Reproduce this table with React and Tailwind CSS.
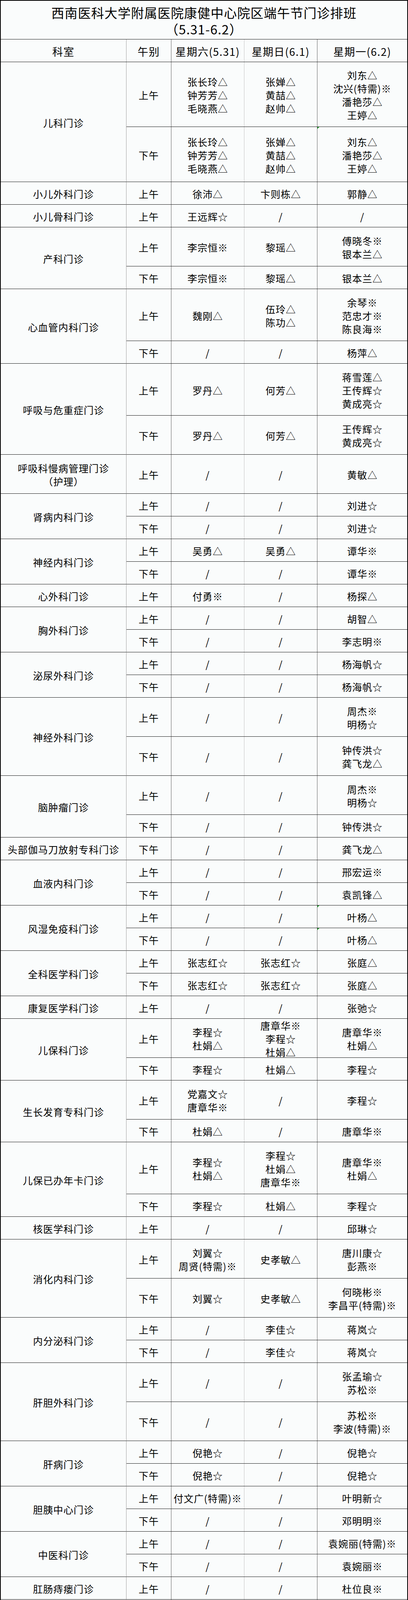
import React from 'react';

const H = {
  58: 'h-[58px]',
  91: 'h-[91px]',
  100: 'h-[100px]',
  133: 'h-[133px]',
  141: 'h-[141px]',
  166: 'h-[166px]',
};

const X = '/';
const r = (s, h, c, opt = {}) => ({ s, h, c, ...opt });

const depts = [
  { n: ['儿科门诊'], r: [
    r('上午', 166, [['张长玲△', '钟芳芳△', '毛晓燕△'], ['张婵△', '黄喆△', '赵帅△'], ['刘东△', '沈兴(特需)※', '潘艳莎△', '王婷△']]),
    r('下午', 141, [['张长玲△', '钟芳芳△', '毛晓燕△'], ['张婵△', '黄喆△', '赵帅△'], ['刘东△', '潘艳莎△', '王婷△']], { g: true }),
  ]},
  { n: ['小儿外科门诊'], r: [r('上午', 58, ['徐沛△', '卞则栋△', '郭静△'])] },
  { n: ['小儿骨科门诊'], r: [r('上午', 58, ['王远辉☆', X, X])] },
  { n: ['产科门诊'], r: [
    r('上午', 100, ['李宗恒※', '黎瑶△', ['傅晓冬※', '银本兰△']]),
    r('下午', 58, ['李宗恒※', '黎瑶△', '银本兰△']),
  ]},
  { n: ['心血管内科门诊'], r: [
    r('上午', 133, ['魏刚△', ['伍玲△', '陈功△'], ['余琴※', '范忠才※', '陈良海※']]),
    r('下午', 58, [X, X, '杨萍△']),
  ]},
  { n: ['呼吸与危重症门诊'], r: [
    r('上午', 133, ['罗丹△', '何芳△', ['蒋雪莲△', '王传辉☆', '黄成亮☆']]),
    r('下午', 100, ['罗丹△', '何芳△', ['王传辉☆', '黄成亮☆']]),
  ]},
  { n: ['呼吸科慢病管理门诊', '（护理）'], r: [r('上午', 100, [X, X, '黄敏△'])] },
  { n: ['肾病内科门诊'], r: [r('上午', 58, [X, X, '刘进☆']), r('下午', 58, [X, X, '刘进☆'])] },
  { n: ['神经内科门诊'], r: [r('上午', 58, ['吴勇△', '吴勇△', '谭华※']), r('下午', 58, [X, X, '谭华※'])] },
  { n: ['心外科门诊'], r: [r('上午', 58, ['付勇※', X, '杨探△'])] },
  { n: ['胸外科门诊'], r: [r('上午', 58, [X, X, '胡智△']), r('下午', 58, [X, X, '李志明※'])] },
  { n: ['泌尿外科门诊'], r: [r('上午', 58, [X, X, '杨海帆☆']), r('下午', 58, [X, X, '杨海帆☆'])] },
  { n: ['神经外科门诊'], r: [
    r('上午', 100, [X, X, ['周杰※', '明杨☆']]),
    r('下午', 100, [X, X, ['钟传洪☆', '龚飞龙△']]),
  ]},
  { n: ['脑肿瘤门诊'], r: [r('上午', 100, [X, X, ['周杰※', '明杨☆']]), r('下午', 58, [X, X, '钟传洪☆'])] },
  { n: ['头部伽马刀放射专科门诊'], r: [r('下午', 58, [X, X, '龚飞龙△'])] },
  { n: ['血液内科门诊'], r: [r('上午', 58, [X, X, '邢宏运※']), r('下午', 58, [X, X, '袁凯锋△'])] },
  { n: ['风湿免疫科门诊'], r: [r('上午', 58, [X, X, '叶杨△'], { g: true }), r('下午', 58, [X, X, '叶杨△'], { g: true })] },
  { n: ['全科医学科门诊'], r: [r('上午', 58, ['张志红☆', '张志红☆', '张庭△']), r('下午', 58, ['张志红☆', '张志红☆', '张庭△'])] },
  { n: ['康复医学科门诊'], r: [r('上午', 58, [X, X, '张弛☆'])] },
  { n: ['儿保科门诊'], r: [
    r('上午', 100, [['李程☆', '杜娟△'], ['唐章华※', '李程☆', '杜娟△'], ['唐章华※', '杜娟△']]),
    r('下午', 58, ['李程☆', '杜娟△', '李程☆']),
  ]},
  { n: ['生长发育专科门诊'], r: [
    r('上午', 100, [['党嘉文☆', '唐章华※'], X, '李程☆']),
    r('下午', 58, ['杜娟△', X, '唐章华※']),
  ]},
  { n: ['儿保已办年卡门诊'], r: [
    r('上午', 133, [['李程☆', '杜娟△'], ['李程☆', '杜娟△', '唐章华※'], ['唐章华※', '杜娟△']]),
    r('下午', 58, ['李程☆', '杜娟△', '李程☆']),
  ]},
  { n: ['核医学科门诊'], r: [r('上午', 58, [X, X, '邱琳☆'])] },
  { n: ['消化内科门诊'], r: [
    r('上午', 100, [['刘翼☆', '周贤(特需)※'], '史孝敏△', ['唐川康☆', '彭燕※']]),
    r('下午', 100, ['刘翼☆', '史孝敏△', ['何晓彬※', '李昌平(特需)※']]),
  ]},
  { n: ['内分泌科门诊'], r: [r('上午', 58, [X, '李佳☆', '蒋岚☆']), r('下午', 58, [X, '李佳☆', '蒋岚☆'])] },
  { n: ['肝胆外科门诊'], r: [
    r('上午', 100, [X, X, ['张孟瑜☆', '苏松※']]),
    r('下午', 100, [X, X, ['苏松※', '李波(特需)※']]),
  ]},
  { n: ['肝病门诊'], r: [r('上午', 58, ['倪艳☆', X, '倪艳☆']), r('下午', 58, ['倪艳☆', X, '倪艳☆'])] },
  { n: ['胆胰中心门诊'], r: [r('上午', 58, ['付文广(特需)※', X, '叶明新☆']), r('下午', 58, [X, X, '邓明明※'])] },
  { n: ['中医科门诊'], r: [r('上午', 58, [X, X, '袁婉丽(特需)※']), r('下午', 58, [X, X, '袁婉丽※'])] },
  { n: ['肛肠痔瘘门诊'], r: [r('上午', 58, [X, X, '杜位良※'])] },
  { n: ['针灸推拿门诊'], r: [r('上午', 58, [X, X, '侯英△'])] },
  { n: ['面瘫针灸门诊'], r: [r('上午', 58, [X, X, '侯英△'])] },
  { n: ['肿瘤科门诊'], r: [
    r('上午', 133, [X, X, ['任培蓉☆', '何丽佳☆', '吴敬波(特需)※']]),
    r('下午', 58, [X, X, '邹凌琳☆']),
  ]},
  { n: ['日间治疗门诊'], r: [r('上午', 58, [X, X, '钟丽△'], { g: true, up: true })] },
  { n: ['胃肠外科门诊'], r: [r('上午', 58, [X, X, '李建新△']), r('下午', 100, [X, X, ['周业江※', '赵正飞☆']])] },
  { n: ['脊柱外科门诊'], r: [r('上午', 58, ['叶飞☆', '袁浩△', '杨超华△']), r('下午', 58, ['袁浩△', '袁浩△', '杨超华△'])] },
  { n: ['整形烧伤外科门诊'], r: [r('上午', 58, [X, X, '刘利刚△']), r('下午', 58, [X, X, '刘利刚△'])] },
  { n: ['伤口造口淋巴水肿门诊'], r: [r('上午', 58, [X, X, '刘利刚△']), r('下午', 58, [X, X, '刘利刚△'])] },
  { n: ['耳鼻咽喉头颈外科门诊'], r: [r('上午', 58, ['刘淑云☆', '许胜恩△', '周伟华△']), r('下午', 58, ['梁灼萍☆', '刘均△', '余成清△'])] },
  { n: ['儿童耳鼻喉头颈外科门诊'], r: [r('上午', 58, ['姜梁※', X, X])] },
  { n: ['医学皮肤美容门诊'], r: [r('上午', 58, ['周霖△', '徐爱国△', '刘洪均△']), r('下午', 58, ['周霖△', '徐爱国△', '刘洪均△'])] },
  { n: ['乳腺外科门诊'], r: [r('上午', 58, [X, X, '权毅☆']), r('下午', 58, [X, X, '黄明全☆'])] },
  { n: ['乳腺外科预住院门诊'], r: [r('上午', 58, ['赵梦凡△', '梁斌△', '梁斌△']), r('下午', 58, [X, X, '梁斌△'])] },
  { n: ['妇科门诊'], r: [r('上午', 58, ['游秀秀△', '蒲大力△', '何凤鸣☆']), r('下午', 58, ['游秀秀△', '蒲大力△', '何凤鸣☆'])] },
  { n: ['麻醉科门诊'], r: [r('下午', 58, [X, X, '阮明华△'])] },
  { n: ['皮肤科门诊'], r: [
    r('上午', 91, [['李燎※', '刘雪萍△'], ['熊霞※', '邓莉△'], ['钟建桥※', '钟桂书※']]),
    r('下午', 91, ['刘雪萍△', '邓莉△', ['徐基祥△', '黄书莉△']]),
  ]},
  { n: ['儿童皮肤病门诊'], r: [
    r('上午', 91, [['李燎※', '刘雪萍△'], ['熊霞※', '邓莉△'], ['钟建桥※', '钟桂书※']]),
    r('下午', 91, ['刘雪萍△', '邓莉△', ['徐基祥△', '黄书莉△']]),
  ]},
  { n: ['皮肤美容科门诊'], r: [r('上午', 58, ['周霖△', '徐爱国△', X]), r('下午', 58, ['周霖△', '徐爱国△', X])] },
];

const Lines = ({ v }) => {
  const list = Array.isArray(v) ? v : [v];
  return list.map((t, i) => (
    <span key={i} className="whitespace-nowrap">{t}</span>
  ));
};

const Session = ({ row }) => (
  <div className={`flex border-b border-[#1a1a1a] ${H[row.h]}`}>
    <div className="w-[115px] shrink-0 border-r border-[#606060] flex items-center justify-center pt-[3px]">
      {row.s}
    </div>
    <div className="w-[187px] shrink-0 border-r border-[#c4c4c4] flex flex-col items-center justify-center pt-[3px]">
      <Lines v={row.c[0]} />
    </div>
    <div className="w-[187px] shrink-0 border-r border-[#606060] flex flex-col items-center justify-center pt-[3px]">
      <Lines v={row.c[1]} />
    </div>
    <div className={`relative flex-1 flex flex-col items-center justify-center ${row.up ? 'pb-[18px]' : 'pt-[3px]'}`}>
      {row.g && (
        <span className="absolute left-0 top-0 w-0 h-0 border-t-[5px] border-t-[#1f9a2a] border-r-[5px] border-r-transparent" />
      )}
      <Lines v={row.c[2]} />
    </div>
  </div>
);

export default function App() {
  return (
    <div className="w-[1045px] bg-[#fafcfc] text-black border-x-2 border-t-2 border-b-2 border-black font-['Noto_Sans_CJK_SC','Noto_Sans_CJK_TC',sans-serif] text-[25px] tracking-[1px] leading-[34px]">
      <div className="h-[99px] border-b border-[#1a1a1a] flex flex-col items-center justify-center pt-[4px] text-[33px] leading-[42px]">
        <span>西南医科大学附属医院康健中心院区端午节门诊排班</span>
        <span>（5.31-6.2）</span>
      </div>

      <div className="flex h-[58px] border-b border-[#1a1a1a] text-[27px] tracking-[1.5px]">
        <div className="w-[322px] shrink-0 border-r border-[#a0a0a0] flex items-center justify-center pt-[4px]">科室</div>
        <div className="w-[115px] shrink-0 border-r border-[#606060] flex items-center justify-center pt-[4px]">午别</div>
        <div className="w-[187px] shrink-0 border-r border-[#c4c4c4] flex items-center justify-center pt-[4px] whitespace-nowrap">星期六(5.31)</div>
        <div className="w-[187px] shrink-0 border-r border-[#606060] flex items-center justify-center pt-[4px] whitespace-nowrap">星期日(6.1)</div>
        <div className="flex-1 flex items-center justify-center pt-[4px] whitespace-nowrap">星期一(6.2)</div>
      </div>

      {depts.map((d, i) => (
        <div key={i} className="flex">
          <div className="w-[322px] shrink-0 border-r border-r-[#a0a0a0] border-b border-b-[#1a1a1a] flex flex-col items-center justify-center pt-[3px]">
            <Lines v={d.n} />
          </div>
          <div className="flex-1 flex flex-col">
            {d.r.map((row, j) => (
              <Session key={j} row={row} />
            ))}
          </div>
        </div>
      ))}

      <div className="h-[99px] flex flex-col items-center justify-center pt-[3px] leading-[35px]">
        <div className="whitespace-nowrap">
          <span>备注：主任医师</span>
          <span className="ml-[20px]">※</span>
          <span className="ml-[38px]">副主任医师</span>
          <span className="ml-[13px]">☆</span>
          <span className="ml-[30px]">主治医师△</span>
        </div>
        <div className="whitespace-nowrap pl-[72px]">统计时间截止至2025年5月27日12:00，实际排班以当日公布为准</div>
      </div>
    </div>
  );
}
